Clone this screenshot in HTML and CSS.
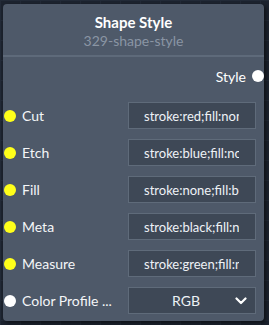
FILE: index.html
```html
<!DOCTYPE html>
<html lang="en">
<head>
    <meta charset="UTF-8">
    <meta name="viewport" content="width=device-width, initial-scale=1.0">
    <title>Shape Style</title>
    <link rel="stylesheet" href="styles.css">
</head>
<body>
    <div class="node">
        <div class="node-header">
            <div class="node-title">Shape Style</div>
            <div class="node-id">329-shape-style</div>
        </div>
        <div class="node-body">
            <div class="output-row">
                <span class="output-label">Style</span>
                <span class="socket socket-white"></span>
            </div>
            <div class="input-row">
                <span class="socket socket-yellow"></span>
                <label class="input-label" for="cut">Cut</label>
                <input class="field" type="text" id="cut" value="stroke:red;fill:none">
            </div>
            <div class="input-row">
                <span class="socket socket-yellow"></span>
                <label class="input-label" for="etch">Etch</label>
                <input class="field" type="text" id="etch" value="stroke:blue;fill:none">
            </div>
            <div class="input-row">
                <span class="socket socket-yellow"></span>
                <label class="input-label" for="fill">Fill</label>
                <input class="field" type="text" id="fill" value="stroke:none;fill:black">
            </div>
            <div class="input-row">
                <span class="socket socket-yellow"></span>
                <label class="input-label" for="meta">Meta</label>
                <input class="field" type="text" id="meta" value="stroke:black;fill:none">
            </div>
            <div class="input-row">
                <span class="socket socket-yellow"></span>
                <label class="input-label" for="measure">Measure</label>
                <input class="field" type="text" id="measure" value="stroke:green;fill:none">
            </div>
            <div class="input-row">
                <span class="socket socket-white"></span>
                <span class="input-label">Color Profile ...</span>
                <div class="field select">
                    <span class="select-value">RGB</span>
                    <svg class="chevron" width="12" height="8" viewBox="0 0 12 8">
                        <path d="M1.5 1.5 L6 6 L10.5 1.5" fill="none" stroke="#ffffff" stroke-width="2.2" stroke-linecap="round" stroke-linejoin="round"/>
                    </svg>
                </div>
            </div>
        </div>
    </div>
</body>
</html>
```

FILE: styles.css
```css
body {
    margin: 0;
    padding: 4px 5px 4px 3px;
    background-color: #1c232f;
    background-image:
        linear-gradient(#222a37 1px, transparent 1px),
        linear-gradient(90deg, #222a37 1px, transparent 1px);
    background-size: 20px 20px;
    font-family: Lato, "Open Sans", sans-serif;
    height: 325px;
    box-sizing: border-box;
}
.node {
    width: 261px;
    height: 317px;
    box-sizing: border-box;
    background: #4e5969;
    border-radius: 4px;
    box-shadow: 2px 2px 4px rgba(0,0,0,0.55);
}
.node-header {
    padding: 8px 0 5px;
    border-bottom: 2px solid #5e6a7a;
    text-align: center;
}
.node-title {
    color: #ffffff;
    font-weight: bold;
    font-size: 15px;
    line-height: 20px;
}
.node-id {
    color: #8a95a4;
    font-size: 14px;
    line-height: 18px;
}
.node-body {
    padding: 7px 0 7px;
}
.output-row {
    display: flex;
    justify-content: flex-end;
    align-items: center;
    gap: 6px;
    height: 24px;
    margin-bottom: 14px;
}
.output-label {
    color: #ffffff;
    font-size: 14px;
}
.socket {
    width: 12px;
    height: 12px;
    border-radius: 50%;
    flex-shrink: 0;
}
.socket-white {
    background: #ffffff;
}
.socket-yellow {
    background: #ffff1a;
}
.input-row {
    display: flex;
    align-items: center;
    height: 27px;
    padding-left: 1px;
    margin-bottom: 10px;
}
.input-row:last-child {
    margin-bottom: 0;
}
.input-label {
    color: #f4f6f8;
    font-size: 14px;
    margin-left: 6px;
    width: 106px;
    white-space: nowrap;
    overflow: hidden;
}
.field {
    width: 128px;
    height: 27px;
    box-sizing: border-box;
    background: #3e4856;
    border: 1px solid #5f6b7a;
    color: #eef2f6;
    font-family: Lato, "Open Sans", sans-serif;
    font-size: 13px;
    padding: 0 16px 0 15px;
    outline: none;
}
.select {
    display: flex;
    align-items: center;
    padding: 0 8px 0 0;
}
.select-value {
    flex: 1;
    text-align: center;
    font-size: 14px;
    padding-left: 8px;
}
.chevron {
    display: block;
}
```
